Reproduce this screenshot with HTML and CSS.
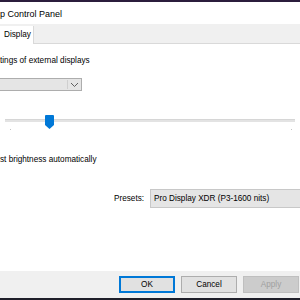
FILE: index.html
```html
<!DOCTYPE html>
<html>
<head>
<meta charset="utf-8">
<link rel="stylesheet" href="styles.css">
</head>
<body>
<div class="window">
  <div class="topbar"></div>
  <div class="titlebar">p Control Panel</div>
  <div class="tabs"><div class="tab">Display</div></div>
  <div class="content">
    <div class="label">tings of external displays</div>
    <div class="dropdown">
      <div class="dd-field"></div>
      <div class="dd-arrow">
        <svg width="9" height="6" viewBox="0 0 9 6"><path d="M1 1 L4.5 4.5 L8 1" fill="none" stroke="#606060" stroke-width="1"/></svg>
      </div>
    </div>
    <div class="slider">
      <div class="track"></div>
      <svg class="thumb" width="9" height="14" viewBox="0 0 9 14"><path d="M0 1 Q0 0 1 0 L8 0 Q9 0 9 1 L9 10 L4.5 14 L0 10 Z" fill="#0078d7"/></svg>
      <div class="tick tick-l"></div>
      <div class="tick tick-r"></div>
    </div>
    <div class="label auto">st brightness automatically</div>
    <div class="presets">
      <span class="plabel">Presets:</span>
      <div class="pbox">Pro Display XDR (P3-1600 nits)</div>
    </div>
  </div>
  <div class="footer">
    <div class="btn ok">OK</div>
    <div class="btn">Cancel</div>
    <div class="btn disabled">Apply</div>
  </div>
  <div class="bottombar"></div>
</div>
</body>
</html>
```
FILE: styles.css
```css
html, body { margin: 0; padding: 0; }
body {
  width: 300px; height: 300px; overflow: hidden;
  font-family: "Liberation Sans", Arial, sans-serif;
  font-size: 8.2px; color: #000; background: #fff;
}
.window { display: flex; flex-direction: column; height: 300px; }
.topbar { height: 2px; background: #2b1d3c; flex: none; }
.titlebar {
  height: 22px; line-height: 25px; font-size: 9px; color: #000;
  background: #fff; flex: none; padding-left: 0; white-space: nowrap;
}
.tabs {
  height: 19px; background: #f0f0f0; border-bottom: 1px solid #d9d9d9;
  flex: none; display: flex; align-items: flex-end;
}
.tab {
  width: 29px; height: 18px; margin-bottom: -1px; background: #fff;
  border-right: 1px solid #d9d9d9; padding-left: 4px;
  line-height: 18px; white-space: nowrap;
}
.content { flex: 1; position: relative; }
.label { margin-top: 10px; line-height: 14px; white-space: nowrap; }
.dropdown {
  margin-top: 10px; width: 82px; height: 13px; display: flex;
  background: #e5e5e5; border: 1px solid #adadad; border-left: none;
  box-sizing: border-box;
}
.dd-field { flex: 1; border-right: 1px solid #cfcfcf; margin: 1px 0; }
.dd-arrow { width: 13px; display: flex; align-items: center; justify-content: center; }
.slider { position: relative; height: 16px; margin-top: 24px; }
.track {
  position: absolute; left: 5px; width: 290px; top: 4px; height: 3px;
  background: #e3e3e3; border-top: 1px solid #d6d6d6; box-sizing: border-box;
}
.thumb { position: absolute; left: 45px; top: 0; }
.tick { position: absolute; top: 14px; width: 1px; height: 1px; background: #c4c4c4; }
.tick-l { left: 10px; }
.tick-r { left: 291px; }
.auto { margin-top: 22px; }
.presets {
  margin-top: 22px; display: flex; align-items: center;
}
.plabel { margin-left: 114px; width: 36px; white-space: nowrap; }
.pbox {
  flex: 1; height: 17px; line-height: 17px; background: #e5e5e5;
  border: 1px solid #c8c8c8; border-right: none; padding-left: 3px; white-space: nowrap;
}
.footer {
  height: 27px; background: #f0f0f0; flex: none;
  display: flex; align-items: center; justify-content: flex-end;
  gap: 6px; padding-right: 1px;
}
.btn {
  box-sizing: border-box;
  width: 56px; height: 17px; line-height: 15px; text-align: center;
  background: #e1e1e1; border: 1px solid #adadad;
}
.btn.ok { border: 2px solid #0078d7; line-height: 13px; }
.btn.disabled { background: #cccccc; border-color: #bfbfbf; color: #a0a0a0; }
.bottombar { height: 2px; background: #1f1f2a; flex: none; }
```
